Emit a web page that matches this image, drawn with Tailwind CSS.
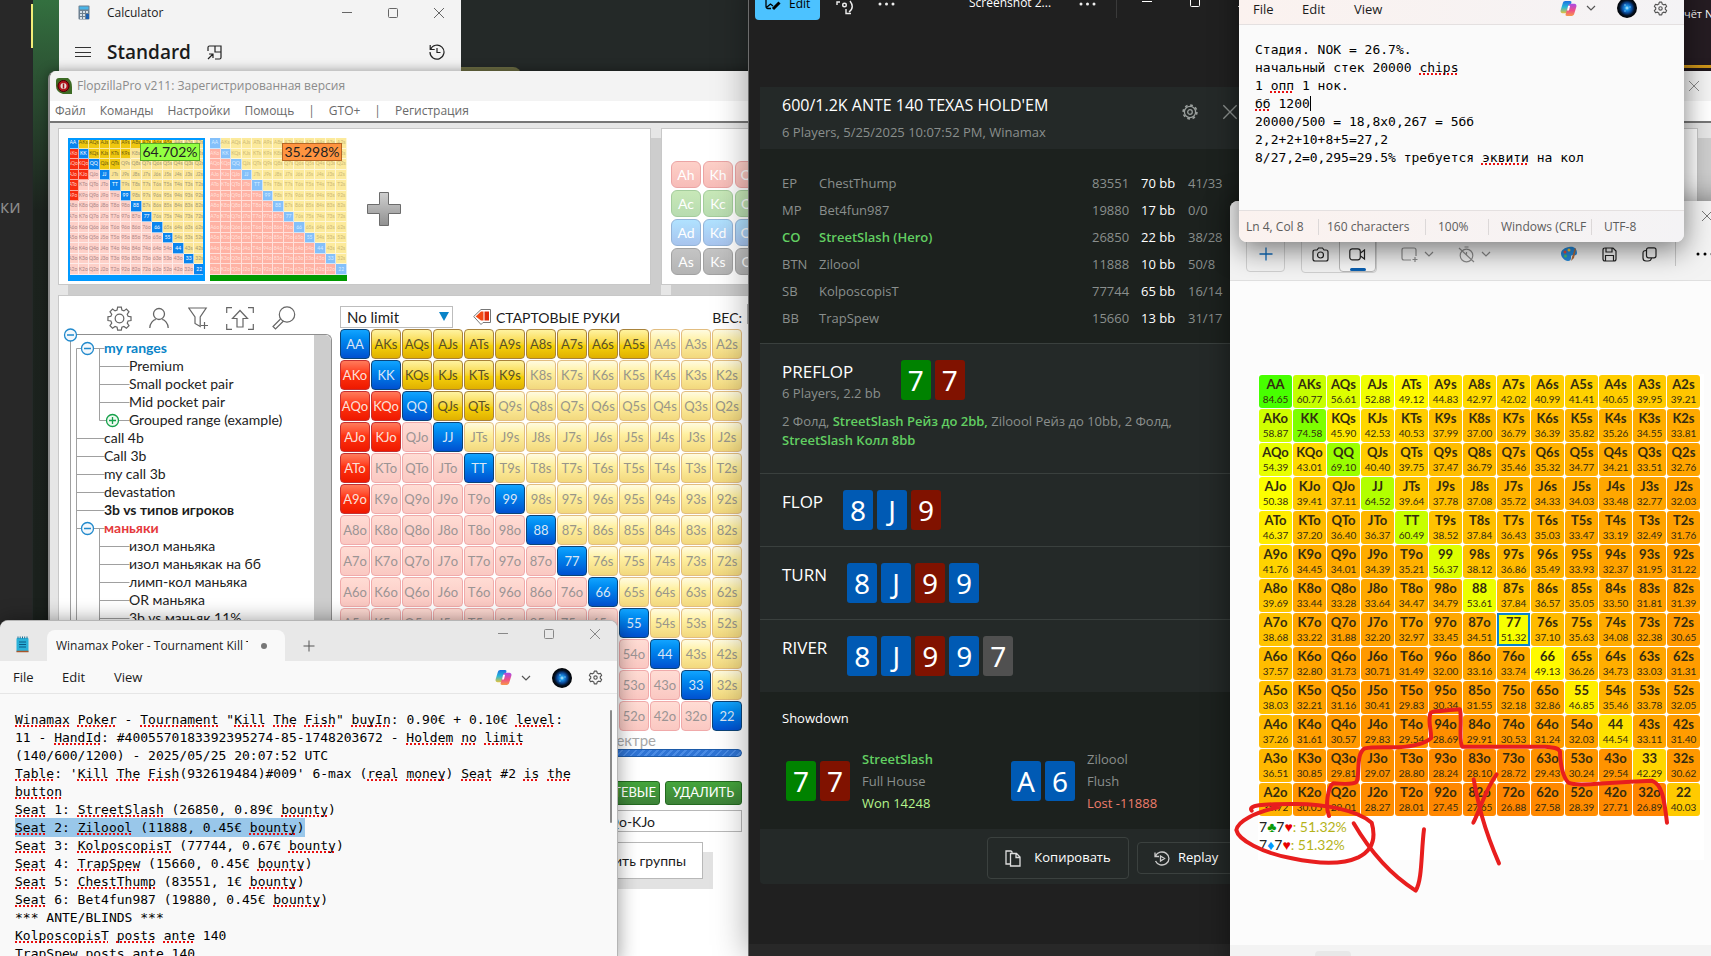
<!DOCTYPE html>
<html lang="ru">
<head>
<meta charset="utf-8">
<title>Desktop</title>
<script src="https://cdn.jsdelivr.net/npm/@tailwindcss/browser@4"></script>
</head>
<body class="h-screen overflow-hidden bg-[#242928] [font-family:'Open_Sans','Noto_Sans',sans-serif] text-[13px] text-[#1b1b1b]">

<svg width="0" height="0" class="absolute" aria-hidden="true">
  <defs>
    <linearGradient id="cpA" x1="0" y1="0" x2="0" y2="1"><stop offset="0" stop-color="#1b6fe0"/><stop offset=".5" stop-color="#28b8d8"/><stop offset="1" stop-color="#e8c23a"/></linearGradient>
    <linearGradient id="cpB" x1="0" y1="0" x2="0" y2="1"><stop offset="0" stop-color="#a94be8"/><stop offset=".55" stop-color="#ee4f88"/><stop offset="1" stop-color="#f7974a"/></linearGradient>
    <radialGradient id="orb"><stop offset="0" stop-color="#c8f4ff"/><stop offset=".22" stop-color="#1a94e8"/><stop offset=".5" stop-color="#0c4a9a"/><stop offset=".75" stop-color="#031226"/><stop offset="1" stop-color="#000"/></radialGradient>
    <linearGradient id="plusG" x1="0" y1="0" x2="0" y2="1"><stop offset="0" stop-color="#d0d0d0"/><stop offset="1" stop-color="#909090"/></linearGradient>
    <symbol id="min" viewBox="0 0 12 12"><path d="M1 5.500h10" stroke="currentColor" fill="none"/></symbol>
    <symbol id="max" viewBox="0 0 12 12"><rect x="1.500" y="1.500" width="9" height="9" rx="1" stroke="currentColor" fill="none"/></symbol>
    <symbol id="cls" viewBox="0 0 12 12"><path d="M1 1l10 10M11 1L1 11" stroke="currentColor" fill="none"/></symbol>
    <symbol id="chev" viewBox="0 0 10 10"><path d="M1 3l4 4 4-4" stroke="currentColor" fill="none" stroke-width="1.200"/></symbol>
    <symbol id="gear" viewBox="0 0 16 16"><path d="M6.700 1.200h2.600l.5 2 1.500.9 2-.6 1.300 2.300-1.500 1.400v1.600l1.500 1.400-1.300 2.300-2-.6-1.500.9-.5 2H6.700l-.5-2-1.500-.9-2 .6-1.300-2.300 1.500-1.400V7.200L1.400 5.800l1.300-2.300 2 .6 1.500-.9z" stroke="currentColor" fill="none" stroke-linejoin="round" stroke-width="1.200"/><circle cx="8" cy="8" r="1.800" stroke="currentColor" fill="none" stroke-width="1.200"/></symbol>
    <symbol id="cog" viewBox="0 0 26 26"><path d="M11 1.500h4l.6 3.200 2.200.9 2.700-1.900 2.800 2.800-1.900 2.700.9 2.200 3.200.6v4l-3.200.6-.9 2.200 1.900 2.700-2.800 2.800-2.700-1.900-2.200.9-.6 3.200h-4l-.6-3.200-2.200-.9-2.700 1.900-2.800-2.800 1.900-2.700-.9-2.200-3.200-.6v-4l3.200-.6.9-2.200-1.900-2.700 2.800-2.800 2.700 1.900 2.200-.9z" stroke="currentColor" fill="none" stroke-width="1.300" transform="translate(.5 -.3) scale(.96)"/><circle cx="13" cy="13" r="4.500" stroke="currentColor" fill="none" stroke-width="1.300"/></symbol>
    <symbol id="cogBold" viewBox="0 0 16 16"><circle cx="8" cy="8" r="5.600" stroke="currentColor" fill="none" stroke-width="1.300"/><circle cx="8" cy="8" r="6.900" stroke="currentColor" fill="none" stroke-width="1.600" stroke-dasharray="2.700 2.719"/><circle cx="8" cy="8" r="2.300" stroke="currentColor" fill="none" stroke-width="1.300"/></symbol>
    <symbol id="copilot" viewBox="0 0 16 16"><path d="M5 1h4.500c1 0 1.500.7 1.200 1.600L8 11c-.3 1-1 1.500-2 1.500H2.500C.8 12.500.2 11 .6 9.700L2.600 3C3 1.700 3.800 1 5 1z" fill="url(#cpA)"/><path d="M11 15H6.500c-1 0-1.500-.7-1.200-1.600L8 5c.3-1 1-1.500 2-1.500h3.500c1.700 0 2.300 1.500 1.900 2.800L13.400 13c-.4 1.300-1.200 2-2.400 2z" fill="url(#cpB)"/><path d="M7.600 5.500h1.900L8.400 9.800H6.600z" fill="#fff"/></symbol>
    <symbol id="avatar" viewBox="0 0 20 20"><circle cx="10" cy="10" r="10" fill="url(#orb)"/><circle cx="8" cy="7" r=".7" fill="#9df"/><circle cx="13" cy="9" r=".7" fill="#7cf"/><circle cx="8" cy="13" r=".7" fill="#7cf"/></symbol>
  </defs>
</svg>

<!-- Desktop behind the windows -->
<div class="absolute inset-y-0 left-0 w-8 bg-[#282828] flex items-start pt-[194px] text-[18px] leading-6 text-[#8c8c8c]" aria-hidden="true">ки</div>
<div class="absolute left-[33px] top-0 bottom-0 w-[26px] bg-linear-to-b from-[#33703f] via-[#1c231e] via-[22%] to-[#1a1f1c]"></div>
<div class="absolute left-[31px] top-1 h-11 w-[2px] bg-[#f2ee78]"></div>
<div class="absolute left-[461px] top-[67px] h-3 w-[60px] rounded-tr-lg bg-[#6b6c42]"></div>
<div class="absolute left-[1684px] right-0 top-0 h-[71px] bg-[#251c22] text-white text-[11px] leading-7 whitespace-nowrap">чёт N<div class="absolute inset-x-0 top-[65px] h-[3px] bg-[#e0a21c]"></div></div>

<!-- Calculator -->
<section aria-label="Calculator" class="absolute left-[59px] -top-[10px] w-[402px] h-[300px] rounded-lg bg-[#f3f3f3] overflow-hidden">
  <header class="flex items-center h-[46px] pl-[19px] pr-4 text-[12px]">
    <svg width="13" height="16" viewBox="0 0 13 16" aria-hidden="true"><rect x=".5" y=".5" width="11" height="14" rx="1" fill="#6d7f8f"/><rect x="1.500" y="1.500" width="9" height="3" fill="#48b4e8"/><g fill="#d7e0e8"><path d="M2 6h2v2H2zM5 6h2v2H5zM8 6h2v2H8zM2 9h2v2H2zM5 9h2v2H5zM2 12h2v2H2zM5 12h2v2H5z"/></g><path d="M8 9h3v5H8z" fill="#1b5fb0"/></svg>
    <span class="ml-4">Calculator</span>
    <div class="ml-auto flex items-center gap-[34px] text-[#666]">
      <button aria-label="Minimize"><svg width="12" height="12"><use href="#min"/></svg></button>
      <button aria-label="Maximize"><svg width="12" height="12"><use href="#max"/></svg></button>
      <button aria-label="Close"><svg width="12" height="12"><use href="#cls"/></svg></button>
    </div>
  </header>
  <div class="flex items-center h-8 px-4">
    <button aria-label="Menu"><svg width="16" height="12" viewBox="0 0 16 12"><path d="M0 1.500h16M0 6.500h16M0 10.500h16" stroke="#333"/></svg></button>
    <h1 class="ml-4 text-[19px] font-semibold leading-7">Standard</h1>
    <button class="ml-4" aria-label="Keep on top"><svg width="15" height="15" viewBox="0 0 15 15" fill="none" stroke="#222" stroke-width="1.200"><path d="M1 6V2.500C1 1.500 1.500 1 2.500 1H14v11.500c0 1-.5 1.500-1.500 1.500H8M8 1v6h6M1 14l5-5M2 9h4v4"/></svg></button>
    <button class="ml-auto" aria-label="History"><svg width="16" height="16" viewBox="0 0 16 16" fill="none" stroke="#222" stroke-width="1.200"><path d="M1.500 5.500A7 7 0 1 1 1 8M1.200 1v4.500h4.500M8 4v4.500h3.500"/></svg></button>
  </div>
</section>

<!-- FlopzillaPro -->
<section aria-label="FlopzillaPro" class="absolute left-12 -right-10 top-[71px] -bottom-6 flex flex-col rounded-tl-lg border-l-2 border-[#8a8a8a] bg-[#e6e6e6] overflow-hidden shadow-[0_0_12px_rgba(0,0,0,0.4)]">
  <header class="flex shrink-0 items-center h-[30px] bg-[#f3f3f3] pl-[6px] pr-[51px] text-[12px] text-[#8b8b8b]">
    <svg width="16" height="16" viewBox="0 0 16 16" aria-hidden="true"><path d="M0 3Q0 0 3 0h9q4 3 4 9v7H7Q0 14 0 8z" fill="#3d6b25"/><circle cx="7.500" cy="8" r="6" fill="#b3141c"/><circle cx="7.500" cy="8" r="5.500" fill="none" stroke="#3a0507"/><circle cx="7.500" cy="8" r="3" fill="#e8dcd8"/><path d="M7.500 5.500v5" stroke="#a01018" stroke-width="1.500"/></svg>
    <span class="ml-[5px]">FlopzillaPro v211: Зарегистрированная версия</span>
    <button class="ml-auto" aria-label="Close"><svg width="12" height="12"><use href="#cls"/></svg></button>
  </header>
  <nav class="flex shrink-0 items-center h-5 bg-white pl-[5px] text-[12px] text-[#6a6a6a] gap-[14px]">
    <button>Файл</button><button>Команды</button><button>Настройки</button><button>Помощь</button><span>|</span><button>GTO+</button><span>|</span><button>Регистрация</button>
  </nav>
  <div class="shrink-0 h-[2px] bg-[#767676]"></div>

  <div class="flex shrink-0 pl-2 pt-[5px] [font-family:Lato,'Open_Sans',sans-serif]">
    <div class="w-[593px] h-[157px] shrink-0 border border-[#c8c8c8] bg-white flex p-[9px] pb-0">
      <div class="relative w-[137px] h-[143px] bg-[#0099ff]">
        <div id="thumbA" class="grid grid-cols-13 grid-rows-13 h-[137px] overflow-hidden text-[5px] leading-none"></div>
        <div class="absolute inset-0 border-2 border-[#0099ff]"></div>
        <div class="absolute right-[5px] top-[5px] w-[60px] h-[18px] border border-[#5aa82c] bg-[#93ff42] text-center text-[14px] leading-4 text-[#222]">64.702%</div>
      </div>
      <div class="relative ml-[5px] w-[137px] h-[143px] bg-[#009a00]">
        <div id="thumbB" class="grid grid-cols-13 grid-rows-13 h-[137px] overflow-hidden text-[5px] leading-none bg-white"></div>
        <div class="absolute right-[5px] top-[5px] w-[60px] h-[18px] border border-[#b56526] bg-[#ff9440] text-center text-[14px] leading-4 text-[#222]">35.298%</div>
      </div>
      <button class="ml-5 -mt-1 self-center" aria-label="Добавить диапазон"><svg width="34" height="34" viewBox="0 0 34 34"><path d="M12.500.5h9v12h12v9h-12v12h-9v-12H.5v-9h12z" fill="url(#plusG)" stroke="#6c6c6c"/></svg></button>
    </div>
    <div class="w-[10px] shrink-0 mt-[10px] bg-[#cdcdcd]"></div>
    <div class="flex-1 border border-[#c8c8c8] bg-white pl-[9px] pt-8">
      <div id="deck" class="grid grid-cols-[repeat(3,30px)] gap-[2px]"></div>
    </div>
    <div class="w-[53px] mt-[10px] bg-[#cdcdcd]"></div>
  </div>
  <div class="flex shrink-0 h-[10px] pl-[18px]">
    <div class="w-[593px] bg-[#cdcdcd]"></div><div class="w-[10px]"></div><div class="flex-1 bg-[#cdcdcd]"></div>
  </div>

  <div class="flex-1 ml-2 flex border-t border-l border-[#c8c8c8] bg-white [font-family:Lato,'Open_Sans',sans-serif] text-[14px]">
    <div class="w-[281px] shrink-0 pl-[11px] pt-2">
      <div class="flex items-center h-[30px] pb-[2px] pl-[37px] text-[#666]">
        <button aria-label="Настройки"><svg width="25" height="25"><use href="#cog"/></svg></button>
        <button class="ml-[17px]" aria-label="Профиль"><svg width="20" height="22" viewBox="0 0 20 22" fill="none" stroke="currentColor" stroke-width="1.300"><circle cx="10" cy="7" r="5.500"/><path d="M.8 21c0-5 3.500-8 6-8.600M19.200 21c0-5-3.500-8-6-8.600"/></svg></button>
        <button class="ml-[19px]" aria-label="Фильтр"><svg width="20" height="22" viewBox="0 0 20 22" fill="none" stroke="currentColor" stroke-width="1.200"><path d="M.8 1h17.400l-6 9v9.500L7 16.500V10zM13 18.500h7M16.500 15v7"/></svg></button>
        <button class="ml-[18px]" aria-label="Экспорт"><svg width="28" height="23" viewBox="0 0 28 23" fill="none" stroke="currentColor" stroke-width="1.200"><path d="M.7 6V.7H6M22 .7h5.300V6M.7 17v5.300H6M22 22.300h5.300V17M14 3.500l7.500 8H17v8.500h-6v-8.500H6.500z"/></svg></button>
        <button class="ml-[18px]" aria-label="Поиск"><svg width="24" height="24" viewBox="0 0 24 24" fill="none" stroke="currentColor" stroke-width="1.200"><circle cx="15" cy="8.500" r="7.700"/><path d="M8.500 13L1 20.500 3.500 23l8-8"/></svg></button>
      </div>
      <div class="relative h-[330px] w-[262px] border-t border-r border-[#8f8f8f] rounded-tr-md">
        <div class="absolute right-0 top-0 h-full w-[17px] bg-[#cdcdcd] rounded-tr-md"></div>
        <svg class="absolute -left-[7px] -top-[7px]" width="80" height="320" viewBox="0 0 80 320" fill="none" aria-hidden="true">
          <g stroke="#a0a0a0"><path d="M7.500 7v313M13.500 20.500V320M13.500 20.500h28M36.500 20.500v72M36.500 38.500h30M36.500 56.500h30M36.500 74.500h30M36.500 92.500h30M13.500 110.500h28M13.500 128.500h28M13.500 146.500h28M13.500 164.500h28M13.500 182.500h28M13.500 200.500h28M36.500 200.500V320M36.500 218.500h30M36.500 236.500h30M36.500 254.500h30M36.500 272.500h30M36.500 290.500h30"/></g>
          <g fill="#f4f8fc" stroke="#2089cc" stroke-width="1.300"><circle cx="7.500" cy="7" r="6"/><circle cx="24.500" cy="20.500" r="6"/><circle cx="24.500" cy="200.500" r="6"/><path d="M4 7h7M21 20.500h7M21 200.500h7"/></g>
          <g fill="#f0faf2" stroke="#15a04a" stroke-width="1.300"><circle cx="49.500" cy="92.500" r="6"/><path d="M46 92.500h7M49.500 89v7"/></g>
        </svg>
        <ul class="relative pt-1 leading-[18px] pl-[34px] whitespace-nowrap">
          <li class="font-bold text-[#0a84c8]">my ranges
            <ul class="pl-[25px] font-normal text-[#222]"><li>Premium</li><li>Small pocket pair</li><li>Mid pocket pair</li><li>Grouped range (example)</li></ul></li>
          <li>call 4b</li><li>Call 3b</li><li>my call 3b</li><li>devastation</li><li class="font-bold">3b vs типов игроков</li>
          <li class="font-bold text-[#e5393c]">маньяки
            <ul class="pl-[25px] font-normal text-[#222]"><li>изол маньяка</li><li>изол маньякак на бб</li><li>лимп-кол маньяка</li><li>OR маньяка</li><li>3b vs маньяк 11%</li></ul></li>
        </ul>
      </div>
    </div>
    <div class="w-[402px] shrink-0 pt-[10px]">
      <div class="flex items-center h-[22px] mb-px">
        <div class="relative">
          <select aria-label="Лимит" class="appearance-none w-[113px] h-[22px] border border-[#bdbdbd] bg-white pl-[6px] text-[15px] leading-5"><option>No limit</option></select>
          <svg class="absolute right-1 top-[6px] pointer-events-none" width="10" height="9" viewBox="0 0 10 9"><path d="M0 0h10L5 9z" fill="#0a84c8"/></svg>
        </div>
        <svg class="ml-5" width="18" height="16" viewBox="0 0 18 16" aria-hidden="true"><path d="M8 .5H17.500v13H10L8 15.500.7 7.500z" fill="#fff" stroke="#777"/><path d="M8 2.500h2.500v9H8L2.700 7.500z" fill="#f24a14"/><path d="M11.500 2.500h4.500v9h-4.500z" fill="#e02a08"/></svg>
        <span class="ml-[5px]">СТАРТОВЫЕ РУКИ</span>
        <span class="ml-auto">ВЕС:</span>
      </div>
      <div id="hands" class="grid grid-cols-[repeat(13,30px)] gap-px text-[13px]"></div>
      <p class="mt-px pl-[236px] leading-4 text-[15px] text-[#a8a8a8] whitespace-nowrap w-[316px] text-right">в спектре</p>
      <div class="mt-px h-2 rounded-sm border border-[#1c5aa8] bg-[repeating-linear-gradient(135deg,#2f74d4_0px,#2f74d4_3px,#4a8be4_3px,#4a8be4_5px)]"></div>
      <div class="mt-6 flex justify-end gap-[5px] text-white text-[13px]">
        <button class="w-[110px] h-6 rounded-[3px] border border-[#246a20] bg-linear-to-b from-[#44a63c] to-[#3d8238] text-right pr-[3px]">МАСТЕВЫЕ</button>
        <button class="w-[77px] h-6 rounded-[3px] border border-[#246a20] bg-linear-to-b from-[#44a63c] to-[#3d8238]">УДАЛИТЬ</button>
      </div>
      <input aria-label="Диапазон" class="mt-[5px] block w-full h-[22px] border border-[#b8b8b8] pr-[86px] text-right text-[14px]" value="ATo, KQo-KJo">
      <div class="mt-[10px] flex"><button class="ml-auto mr-[39px] w-[200px] h-[37px] border border-[#b8b8b8] bg-white pr-4 text-right shadow-[10px_10px_0_#e2e2e2]">Изменить группы</button></div>
    </div>
    <div class="w-px ml-[5px] my-2 h-5 bg-[#b0b0b0]"></div>
  </div>
</section>

<!-- Photos -->
<section aria-label="Photos" class="absolute left-[748px] w-[520px] -top-[22px] bottom-0 flex flex-col border-l border-[#6c6c6c] bg-[#202020] text-white shadow-[0_0_32px_rgba(0,0,0,0.35)]">
  <header class="flex shrink-0 items-center h-12 pl-[6px] text-[12px]">
    <button class="flex items-center gap-2 h-9 w-[65px] rounded-[4px] bg-[#4cc2ff] pl-[10px] pt-1 text-black"><svg width="16" height="14" viewBox="0 0 16 14" fill="none" stroke="#000" stroke-width="1.300"><path d="M9 1H3C1.500 1 1 1.500 1 3v6c0 2 .5 2.500 2 2.500h3M2 10l3.500-3L8 9"/><path d="M8 12l6.500-6.500" stroke-width="3"/></svg>Edit</button>
    <svg class="ml-[15px] mt-2" width="19" height="17" viewBox="0 0 19 17" fill="none" stroke="#eee" stroke-width="1.400"><path d="M2 7V4h3M15 3c3 4 3 8-1 11M11 11v4.500h5"/><circle cx="9.500" cy="7" r="1.800"/></svg>
    <svg class="ml-6 mt-1" width="17" height="4" viewBox="0 0 17 4" fill="#eee"><circle cx="2" cy="2" r="1.500"/><circle cx="8.500" cy="2" r="1.500"/><circle cx="15" cy="2" r="1.500"/></svg>
    <span class="ml-[74px] w-20 pt-[2px] whitespace-nowrap text-[12px]">Screenshot 2...</span>
    <svg class="ml-[30px] mt-1" width="17" height="4" viewBox="0 0 17 4" fill="#eee"><circle cx="2" cy="2" r="1.500"/><circle cx="8.500" cy="2" r="1.500"/><circle cx="15" cy="2" r="1.500"/></svg>
    <div class="ml-5 h-8 w-px bg-[#3a3a3a]"></div>
    <button class="ml-6" aria-label="Minimize"><svg width="12" height="12"><use href="#min"/></svg></button>
    <button class="ml-9" aria-label="Maximize"><svg width="12" height="12"><use href="#max"/></svg></button>
    <button class="ml-9" aria-label="Close"><svg width="12" height="12"><use href="#cls"/></svg></button>
  </header>

  <article class="ml-[11px] mt-[61px] text-[13px] text-[#8a8f8d]">
    <div class="flex h-[62px] bg-[#242928] pl-[22px]">
      <div class="w-[400px] shrink-0 pt-[6px]"><h2 class="text-[16px] leading-6 text-white">600/1.2K ANTE 140 TEXAS HOLD'EM</h2><p class="mt-[6px] leading-[18px]">6 Players, 5/25/2025 10:07:52 PM, Winamax</p></div>
      <svg class="mt-[17px] text-[#9a9f9d]" width="16" height="16"><use href="#cogBold"/></svg>
      <svg class="mt-[17px] ml-6" width="16" height="16"><use href="#cls"/></svg>
    </div>
    <div class="bg-[#1c211e] pl-[22px] pt-[21px] pb-[11px]">
      <table class="w-[450px] table-fixed border-collapse">
        <colgroup><col class="w-[37px]"><col class="w-[273px]"><col class="w-[49px]"><col class="w-[47px]"><col></colgroup>
        <tbody class="[&_td]:h-[27px] [&_td]:p-0 whitespace-nowrap">
          <tr><td>EP</td><td>ChestThump</td><td>83551</td><td class="text-white font-medium">70 bb</td><td>41/33</td></tr>
          <tr><td>MP</td><td>Bet4fun987</td><td>19880</td><td class="text-white font-medium">17 bb</td><td>0/0</td></tr>
          <tr><td class="text-[#62cf62] font-semibold">CO</td><td class="text-[#62cf62] font-semibold">StreetSlash (Hero)</td><td>26850</td><td class="text-white font-medium">22 bb</td><td>38/28</td></tr>
          <tr><td>BTN</td><td>Ziloool</td><td>11888</td><td class="text-white font-medium">10 bb</td><td>50/8</td></tr>
          <tr><td>SB</td><td>KolposcopisT</td><td>77744</td><td class="text-white font-medium">65 bb</td><td>16/14</td></tr>
          <tr><td>BB</td><td>TrapSpew</td><td>15660</td><td class="text-white font-medium">13 bb</td><td>31/17</td></tr>
        </tbody>
      </table>
    </div>
    <div class="h-[130px] border-t border-[#3a403e] bg-[#242928] pl-[22px] pt-4">
      <div class="flex gap-5">
        <div><h3 class="text-[17px] leading-6 text-white">PREFLOP</h3><p class="leading-[18px]">6 Players, 2.2 bb</p></div>
        <div class="flex gap-1" data-cards="7g 7r"></div>
      </div>
      <p class="mt-[10px] w-[400px] leading-[19px]">2 Фолд, <b class="font-semibold text-[#62cf62]">StreetSlash Рейз до 2bb,</b> Ziloool Рейз до 10bb, 2 Фолд, <br><b class="font-semibold text-[#62cf62]">StreetSlash Колл 8bb</b></p>
    </div>
    <div class="flex gap-5 h-[73px] border-t border-[#3a403e] bg-[#242928] pl-[22px] pt-4"><h3 class="text-[17px] leading-6 text-white">FLOP</h3><div class="flex gap-1" data-cards="8b Jb 9r"></div></div>
    <div class="flex gap-5 h-[73px] border-t border-[#3a403e] bg-[#242928] pl-[22px] pt-4"><h3 class="text-[17px] leading-6 text-white">TURN</h3><div class="flex gap-1" data-cards="8b Jb 9r 9b"></div></div>
    <div class="flex gap-5 h-[73px] border-t border-[#3a403e] bg-[#242928] pl-[22px] pt-4"><h3 class="text-[17px] leading-6 text-white">RIVER</h3><div class="flex gap-1" data-cards="8b Jb 9r 9b 7k"></div></div>
    <div class="h-[137px] bg-[#1c211e] pl-[22px] pt-4">
      <h3 class="leading-5 text-white">Showdown</h3>
      <div class="mt-5 flex pl-1">
        <div class="flex items-center w-[225px] gap-3"><div class="flex gap-1" data-cards="7g 7r"></div><p class="leading-[22px]"><b class="font-semibold text-[#62cf62]">StreetSlash</b><br>Full House<br><span class="font-medium text-[#b4f58c]">Won 14248</span></p></div>
        <div class="flex items-center gap-3"><div class="flex gap-1" data-cards="Ab 6b"></div><p class="leading-[22px]">Ziloool<br>Flush<br><span class="font-medium text-[#ee7d6c]">Lost -11888</span></p></div>
      </div>
    </div>
    <div class="flex items-center gap-2 h-[55px] bg-[#242928] pl-[227px] pt-[3px] rounded-b-sm text-white text-[13px] font-medium">
      <button class="flex shrink-0 items-center justify-center gap-[13px] w-[142px] h-[42px] rounded border border-[#3b413f]"><svg width="16" height="17" viewBox="0 0 16 17" fill="none" stroke="#ddd" stroke-width="1.300"><path d="M5 14H1V1h5l1.500 1.500M5.500 3.500h6l3.500 3.500v9H5.500zM11 3.500V7.500h4"/></svg>Копировать</button>
      <button class="flex shrink-0 items-center gap-2 w-[120px] h-8 rounded border border-[#3b413f] pl-4"><svg width="16" height="15" viewBox="0 0 16 15" fill="none" stroke="#ccc" stroke-width="1.300"><path d="M1.500 5A7 6.500 0 1 1 1.500 10M1 1.500V5.500h4M6.500 5l4 2.500-4 2.500z"/></svg>Replay</button>
    </div>
  </article>
  <footer class="mt-auto h-3 shrink-0 bg-[#282828]"></footer>
</section>

<!-- Snipping Tool -->
<section aria-label="Snipping Tool" class="absolute left-[1230px] -right-6 top-[201px] -bottom-4 flex flex-col rounded-tl-lg bg-[#fcfcfc] overflow-hidden shadow-[0_0_28px_rgba(0,0,0,0.45)]">
  <header class="shrink-0 h-[80px] border-b border-[#e0e0e0] bg-[#f3f3f3]">
    <div class="flex justify-end pt-[9px] pr-[22px] text-[#777]"><svg width="12" height="12"><use href="#cls"/></svg></div>
    <div class="flex items-center h-9 mt-[14px] pl-4 text-[#222]">
      <button class="grid place-items-center w-[39px] h-9 rounded border border-[#d0d0d0] text-[#0f6cbd]" aria-label="New"><svg width="14" height="14" viewBox="0 0 14 14"><path d="M7 .5v13M.5 7h13" stroke="currentColor" stroke-width="1.300"/></svg></button>
      <div class="ml-4 flex rounded border border-[#d0d0d0]">
        <button class="grid place-items-center w-[37px] h-9" aria-label="Photo"><svg width="17" height="15" viewBox="0 0 17 15" fill="none" stroke="currentColor" stroke-width="1.200"><path d="M1 5q0-2 2-2h2l1.500-2h4L12 3h2q2 0 2 2v7q0 2-2 2H3q-2 0-2-2z"/><circle cx="8.500" cy="8" r="3"/></svg></button>
        <button class="relative grid place-items-center w-[37px] h-9 rounded border border-[#b8b8b8] bg-[#f8f8f8]" aria-label="Video"><svg width="17" height="13" viewBox="0 0 17 13" fill="none" stroke="currentColor" stroke-width="1.200"><rect x=".8" y=".8" width="10.500" height="11" rx="2.500"/><path d="M11.500 5l4-3v9l-4-3"/></svg><span class="absolute bottom-0 left-[10px] w-4 h-[3px] rounded bg-[#0a5fb0]"></span></button>
      </div>
      <svg class="ml-6" width="17" height="15" viewBox="0 0 17 15" fill="none" stroke="#8d8d8d" stroke-width="1.200"><path d="M10 13H3q-2 0-2-2V3q0-2 2-2h10q2 0 2 2v6M14 10v5M11.500 12.500h5"/></svg>
      <svg class="ml-[6px] text-[#888]" width="10" height="10"><use href="#chev"/></svg>
      <svg class="ml-6" width="17" height="17" viewBox="0 0 17 17" fill="none" stroke="#8d8d8d" stroke-width="1.200"><circle cx="8.500" cy="9.500" r="6.300"/><path d="M6.500 1h4M1 2l15 14M8.500 6v3"/></svg>
      <svg class="ml-[6px] text-[#888]" width="10" height="10"><use href="#chev"/></svg>
      <svg class="ml-[70px]" width="17" height="16" viewBox="0 0 17 16"><path d="M8 1c5-1 8 2 8 6 0 2-2 3-4 2-2 0-2 1-2 3s-1 3-3 3C3 14.500 0 11 0 7.500 0 4 4 1.500 8 1z" fill="#2488d8"/><circle cx="4" cy="6" r="1.500" fill="#e34a3a"/><circle cx="8" cy="4" r="1.500" fill="#f5c33b"/><circle cx="4.500" cy="10" r="1.500" fill="#4cc06a"/><path d="M14 2l-3 9-1 4 3-3 2-9z" fill="#b06a3c"/></svg>
      <svg class="ml-[24px]" width="15" height="15" viewBox="0 0 15 15" fill="none" stroke="currentColor" stroke-width="1.200"><path d="M1 3q0-2 2-2h8l3 3v8q0 2-2 2H3q-2 0-2-2zM4 1v4h6V1M3.500 14V8.500h8V14"/></svg>
      <svg class="ml-[25px]" width="15" height="15" viewBox="0 0 15 15" fill="none" stroke="currentColor" stroke-width="1.200"><rect x="4.500" y=".8" width="9.500" height="10" rx="2"/><path d="M4 3.500Q1 3.500 1 6v5q0 3 3 3h2q3 0 3.500-3"/></svg>
      <div class="ml-[18px] w-px h-6 bg-[#c8c8c8]"></div>
      <svg class="ml-5" width="18" height="4" viewBox="0 0 18 4"><circle cx="2" cy="2" r="1.500"/><circle cx="9" cy="2" r="1.500"/><circle cx="16" cy="2" r="1.500"/></svg>
    </div>
  </header>
  <div class="relative flex-1 pl-[28px] pt-[93px] [font-family:Lato,'Open_Sans',sans-serif]">
    <div class="w-[446px] bg-white pb-[6px]">
      <table id="equity" class="border-separate border-spacing-px table-fixed w-[443px] text-center text-[#332c10]"></table>
      <p class="mt-px pl-px leading-[18px] text-[14px] text-[#b5b31a]"><span class="text-[#222]">7</span><span class="text-[#0a9a0a]">♣</span><span class="text-[#222]">7</span><span class="text-[#e80000]">♥</span>: 51.32%</p>
      <p class="pl-px leading-[18px] text-[14px] text-[#b5b31a]"><span class="text-[#222]">7</span><span class="text-[#0099ff]">♦</span><span class="text-[#222]">7</span><span class="text-[#e80000]">♥</span>: 51.32%</p>
    </div>
    <svg class="absolute left-0 top-0 pointer-events-none" width="480" height="660" viewBox="0 0 480 660" fill="none" aria-hidden="true">
      <g transform="translate(-5 339) scale(.33333)" stroke="#e81e1e" stroke-width="12" stroke-linecap="round" stroke-linejoin="round">
        <path d="M80 572C68 556 110 552 200 552C300 550 400 572 440 608C452 650 445 690 400 712C350 735 280 732 200 715C110 698 40 660 34 630C38 604 90 576 160 562"/>
        <path d="M386 610C430 685 490 760 572 812C592 780 588 700 597 628"/>
        <path d="M312 588C300 560 308 500 325 490C350 492 385 494 395 485C405 460 392 400 420 385C440 380 480 382 520 382C560 380 600 370 618 355C620 330 608 310 616 280C622 270 660 273 705 268C712 300 700 365 712 380L960 380C990 382 1002 385 1005 395C1005 425 1012 470 1030 488C1060 500 1120 488 1280 482C1312 492 1318 540 1326 608"/>
        <path d="M746 478C755 520 765 600 822 730M815 463C780 510 765 570 745 608"/>
      </g>
    </svg>
  </div>
  <footer class="shrink-0 h-[27px] bg-[#f3f3f3] pl-[85px]"><div class="mt-[6px] h-6 w-9 rounded bg-[#e8e8e8]"></div></footer>
</section>

<!-- Notepad, top right -->
<section aria-label="Notepad" class="absolute left-[1239px] w-[445px] -top-8 h-[274px] flex flex-col rounded-lg bg-[#fafafa] overflow-hidden shadow-[0_8px_28px_rgba(0,0,0,0.5)]">
  <nav class="shrink-0 h-[57px] flex items-end border-b border-[#e4e0e0] bg-linear-to-r from-[#fbf2ef] to-[#f4f3f5] pl-[14px] pr-4 pb-[5px] text-[13px]">
    <button class="w-[49px] text-left">File</button><button class="w-[52px] text-left">Edit</button><button>View</button>
    <div class="ml-auto flex items-center h-[22px] text-[#555]"><svg width="17" height="17"><use href="#copilot"/></svg><svg class="ml-[9px]" width="10" height="10"><use href="#chev"/></svg><svg class="ml-[21px]" width="20" height="20"><use href="#avatar"/></svg><svg class="ml-4" width="15" height="15"><use href="#gear"/></svg></div>
  </nav>
  <div role="textbox" aria-label="Text" contenteditable="true" spellcheck="false" class="flex-1 pt-4 pl-4 outline-none [font-family:'DejaVu_Sans_Mono',monospace] text-[13px] leading-[18px] whitespace-pre text-black [&_u]:decoration-dotted [&_u]:decoration-[#e81010] [&_u]:decoration-2 [&_u]:[text-decoration-skip-ink:none]">Стадия. NOK = 26.7%.
начальный стек 20000 <u>chips</u>
1 <u>опп</u> 1 нок.
<u>бб</u> 1200<span class="border-l border-black"></span>
20000/500 = 18,8х0,267 = 5бб
2,2+2+10+8+5=27,2
8/27,2=0,295=29.5% требуется <u>эквити</u> на кол</div>
  <footer class="shrink-0 flex items-center h-8 border-t border-[#e4e0e0] bg-linear-to-r from-[#fbf2ef] to-[#f4f3f5] pl-[7px] text-[12px] text-[#5c5c5c] whitespace-nowrap">
    <span class="w-[73px] h-4 leading-4 border-r border-[#dcd8d8]">Ln 4, Col 8</span><span class="w-[107px] h-4 leading-4 pl-2 border-r border-[#dcd8d8]">160 characters</span><span class="w-[63px] h-4 leading-4 pl-3 border-r border-[#dcd8d8]">100%</span><span class="w-[103px] h-4 leading-4 pl-3 border-r border-[#dcd8d8]">Windows (CRLF</span><span class="h-4 leading-4 pl-3">UTF-8</span>
  </footer>
</section>

<!-- Notepad, bottom left -->
<section aria-label="Notepad: Winamax Poker" class="absolute left-0 w-[618px] top-[620px] -bottom-2 flex flex-col rounded-t-lg border-t border-r border-[#b5b5b5] bg-[#f9f9f9] overflow-hidden shadow-[0_0_20px_rgba(0,0,0,0.4)]">
  <header class="shrink-0 flex items-end h-10 bg-[#e8e8e8] pl-4">
    <svg class="mb-2" width="13" height="17" viewBox="0 0 13 17" aria-hidden="true"><rect x=".5" y="2" width="12" height="14" rx="1" fill="#2ab0d8"/><path d="M.5 15.500h12" stroke="#a8552a" stroke-width="1.500"/><path d="M2 .5v2M4.200.5v2M6.500.5v2M8.700.5v2M11 .5v2" stroke="#186a90"/><path d="M3 6h7M3 8.500h7M3 11h7" stroke="#0b5a86"/></svg>
    <div class="ml-[18px] flex items-center w-[238px] h-[31px] rounded-t-lg bg-[#f9f9f9] pl-[9px] text-[12px]"><span class="w-[192px] overflow-hidden whitespace-nowrap">Winamax Poker - Tournament Kill The Fish</span><span class="ml-[13px] size-[6px] rounded-full bg-[#777]"></span></div>
    <button class="ml-[18px] mb-[9px]" aria-label="New tab"><svg width="12" height="12" viewBox="0 0 12 12"><path d="M6 .5v11M.5 6h11" stroke="#555"/></svg></button>
    <div class="ml-auto mr-4 mb-[21px] flex gap-[34px] text-[#888]"><button aria-label="Minimize"><svg width="12" height="12"><use href="#min"/></svg></button><button aria-label="Maximize"><svg width="12" height="12"><use href="#max"/></svg></button><button aria-label="Close"><svg width="12" height="12"><use href="#cls"/></svg></button></div>
  </header>
  <nav class="shrink-0 flex items-center h-[33px] pt-px border-b border-[#e6e6e6] pl-[13px] pr-[14px] text-[13px]">
    <button class="w-[49px] text-left">File</button><button class="w-[52px] text-left">Edit</button><button>View</button>
    <div class="ml-auto flex items-center text-[#555]"><svg width="17" height="17"><use href="#copilot"/></svg><svg class="ml-[9px]" width="10" height="10"><use href="#chev"/></svg><svg class="ml-[21px]" width="20" height="20"><use href="#avatar"/></svg><svg class="ml-4" width="15" height="15"><use href="#gear"/></svg></div>
  </nav>
  <div class="flex-1 flex overflow-hidden">
    <div role="textbox" aria-label="Text" contenteditable="true" spellcheck="false" class="flex-1 pt-[17px] pl-[15px] outline-none [font-family:'DejaVu_Sans_Mono',monospace] text-[13px] leading-[18px] whitespace-pre text-black [&_u]:decoration-dotted [&_u]:decoration-[#e81010] [&_u]:decoration-2 [&_u]:[text-decoration-skip-ink:none]"><u>Winamax</u> <u>Poker</u> - <u>Tournament</u> "<u>Kill</u> <u>The</u> <u>Fish</u>" <u>buyIn</u>: 0.90€ + 0.10€ <u>level</u>:
11 - <u>HandId</u>: #4005570183392395274-85-1748203672 - <u>Holdem</u> <u>no</u> <u>limit</u>
(140/600/1200) - 2025/05/25 20:07:52 UTC
<u>Table</u>: '<u>Kill</u> <u>The</u> <u>Fish</u>(932619484)#009' 6-max (<u>real</u> <u>money</u>) <u>Seat</u> #2 <u>is</u> <u>the</u>
<u>button</u>
<u>Seat</u> 1: <u>StreetSlash</u> (26850, 0.89€ <u>bounty</u>)
<span class="bg-[#99c7ea] py-[2px]"><u>Seat</u> 2: <u>Ziloool</u> (11888, 0.45€ <u>bounty</u>)</span>
<u>Seat</u> 3: <u>KolposcopisT</u> (77744, 0.67€ <u>bounty</u>)
<u>Seat</u> 4: <u>TrapSpew</u> (15660, 0.45€ <u>bounty</u>)
<u>Seat</u> 5: <u>ChestThump</u> (83551, 1€ <u>bounty</u>)
<u>Seat</u> 6: Bet4fun987 (19880, 0.45€ <u>bounty</u>)
*** ANTE/BLINDS ***
<u>KolposcopisT</u> <u>posts</u> <u>ante</u> 140
<u>TrapSpew</u> <u>posts</u> <u>ante</u> 140</div>
    <div class="mt-4 mr-[5px] h-[113px] w-[2px] rounded bg-[#8a8a8a]"></div>
  </div>
</section>

<script>
const R = 'AKQJT98765432';
const hand = (i, j) => i === j ? R[i] + R[i] : i < j ? R[i] + R[j] + 's' : R[j] + R[i] + 'o';
const suitedOn = [9, 5, 4], offOn = [5, 3];
const kind = (i, j) => i === j ? 'pair' : i < j ? (j <= (suitedOn[i] || 0) ? 'suitedOn' : 'suited') : (i <= (offOn[j] || 0) ? 'offOn' : 'off');
const look = {
  pair: 'bg-linear-to-b from-[#12a4ff] to-[#0050d0] border-[#0c4478] text-[#dbe6f5]',
  suitedOn: 'bg-linear-to-b from-[#fff3a0] via-[#f6d20c] via-[55%] to-[#e0b000] border-[#a8823a] text-[#5a5026]',
  suited: 'bg-linear-to-b from-[#fffbe0] via-[#fff0a0] via-[40%] to-[#f2d87e] border-[#e2bd80] text-[#98968a]',
  offOn: 'bg-linear-to-b from-[#ff7a5a] via-[#ff3210] via-[45%] to-[#ee1800] border-[#c43030] text-[#fae0da]',
  off: 'bg-linear-to-b from-[#ffdcd4] to-[#fac8c2] border-[#f0aaaa] text-[#9b9494]'
};
const mini = {
  pair: 'bg-[#0a84ee] text-white', suitedOn: 'bg-[#f0c810] text-[#6a5a10]', suited: 'bg-[#fbe596] text-[#a39a78]',
  offOn: 'bg-[#f82c10] text-[#ffc8c0]', off: 'bg-[#fdd0c8] text-[#a88]'
};
const pale = {
  pair: 'bg-[#84c0fa] text-[#d8ecff]', suitedOn: 'bg-[#fcea9c] text-[#ccb978]', suited: 'bg-[#fcea9c] text-[#ccb978]',
  offOn: 'bg-[#ffb2a4] text-[#ffe0da]', off: 'bg-[#ffb2a4] text-[#ffe0da]'
};
let big = '', a = '', b = '';
for (let i = 0; i < 13; i++) for (let j = 0; j < 13; j++) {
  const k = kind(i, j), h = hand(i, j);
  big += `<button class="h-[30px] border rounded-[4px] leading-none ${look[k]}">${h}</button>`;
  a += `<span class="flex items-center justify-center border-r border-b border-white/60 ${mini[k]}">${h}</span>`;
  b += `<span class="flex items-center justify-center border-r border-b border-white/60 ${pale[k]}">${h}</span>`;
}
document.getElementById('hands').innerHTML = big;
document.getElementById('thumbA').innerHTML = a;
document.getElementById('thumbB').innerHTML = b;

const deck = {
  h: 'from-[#fdd0c8] to-[#f7bcb8] border-[#eba4a4]', c: 'from-[#c8e8b8] to-[#b8dcb0] border-[#a4cc9c]',
  d: 'from-[#b0e2ff] to-[#a8c4ee] border-[#94b4d8]', s: 'from-[#c4c4c4] to-[#b4b4b4] border-[#a2a2a2]'
};
document.getElementById('deck').innerHTML = ['h', 'c', 'd', 's'].map(s => ['A', 'K', 'Q'].map(r =>
  `<button class="h-[27px] rounded-md border bg-linear-to-b text-white text-[14px] leading-none ${deck[s]}">${r}${s}</button>`).join('')).join('');

const suit = { g: 'bg-[#008200]', r: 'bg-[#801200]', b: 'bg-[#005ab4]', k: 'bg-[#505050]' };
document.querySelectorAll('[data-cards]').forEach(e => {
  e.innerHTML = e.dataset.cards.split(' ').map(c =>
    `<span class="w-[30px] h-10 rounded-[3px] text-white text-[28px] leading-[41px] text-center [font-family:'Noto_Sans',sans-serif] ${suit[c[1]]}">${c[0]}</span>`).join('');
});

const equity = `84.65 60.77 56.61 52.88 49.12 44.83 42.97 42.02 40.99 41.41 40.65 39.95 39.21
58.87 74.58 45.90 42.53 40.53 37.99 37.00 36.79 36.39 35.82 35.26 34.55 33.81
54.39 43.01 69.10 40.40 39.75 37.47 36.79 35.46 35.32 34.77 34.21 33.51 32.76
50.38 39.41 37.11 64.52 39.64 37.78 37.08 35.72 34.33 34.03 33.48 32.77 32.03
46.37 37.20 36.40 36.37 60.49 38.52 37.84 36.43 35.03 33.47 33.19 32.49 31.76
41.76 34.45 34.01 34.39 35.21 56.37 38.12 36.86 35.49 33.93 32.37 31.95 31.22
39.69 33.44 33.28 33.64 34.47 34.79 53.61 37.84 36.57 35.05 33.50 31.81 31.39
38.68 33.22 31.88 32.20 32.97 33.45 34.51 51.32 37.10 35.63 34.08 32.38 30.65
37.57 32.80 31.73 30.71 31.49 32.00 33.16 33.74 49.13 36.26 34.73 33.03 31.31
38.03 32.21 31.16 30.41 29.83 30.34 31.55 32.18 32.86 46.85 35.46 33.78 32.05
37.26 31.61 30.57 29.83 29.54 28.69 29.91 30.53 31.24 32.03 44.54 33.11 31.40
36.51 30.85 29.81 29.07 28.80 28.24 28.10 28.72 29.43 30.24 29.54 42.29 30.62
35.72 30.05 29.01 28.27 28.01 27.45 27.65 26.88 27.58 28.39 27.71 26.89 40.03`.split('\n').map(r => r.split(' '));
const heat = v => v > 50 ? `rgb(${Math.round(255 - (v - 50) * 5.3)},255,0)` : `rgb(255,${Math.round(255 - (50 - v) * 5.3)},0)`;
document.getElementById('equity').innerHTML = '<tbody>' + equity.map((row, i) => '<tr>' + row.map((v, j) =>
  `<td class="h-[33px] p-0 rounded-[3px] ${i === 7 && j === 7 ? 'outline-2 -outline-offset-2 outline-[#0a84c8] rounded-none' : ''}" style="background:${heat(+v)}"><b class="block text-[13px] leading-4">${hand(i, j)}</b><span class="block text-[10px] leading-[15px]">${v}</span></td>`).join('') + '</tr>').join('') + '</tbody>';
</script>
</body>
</html>
